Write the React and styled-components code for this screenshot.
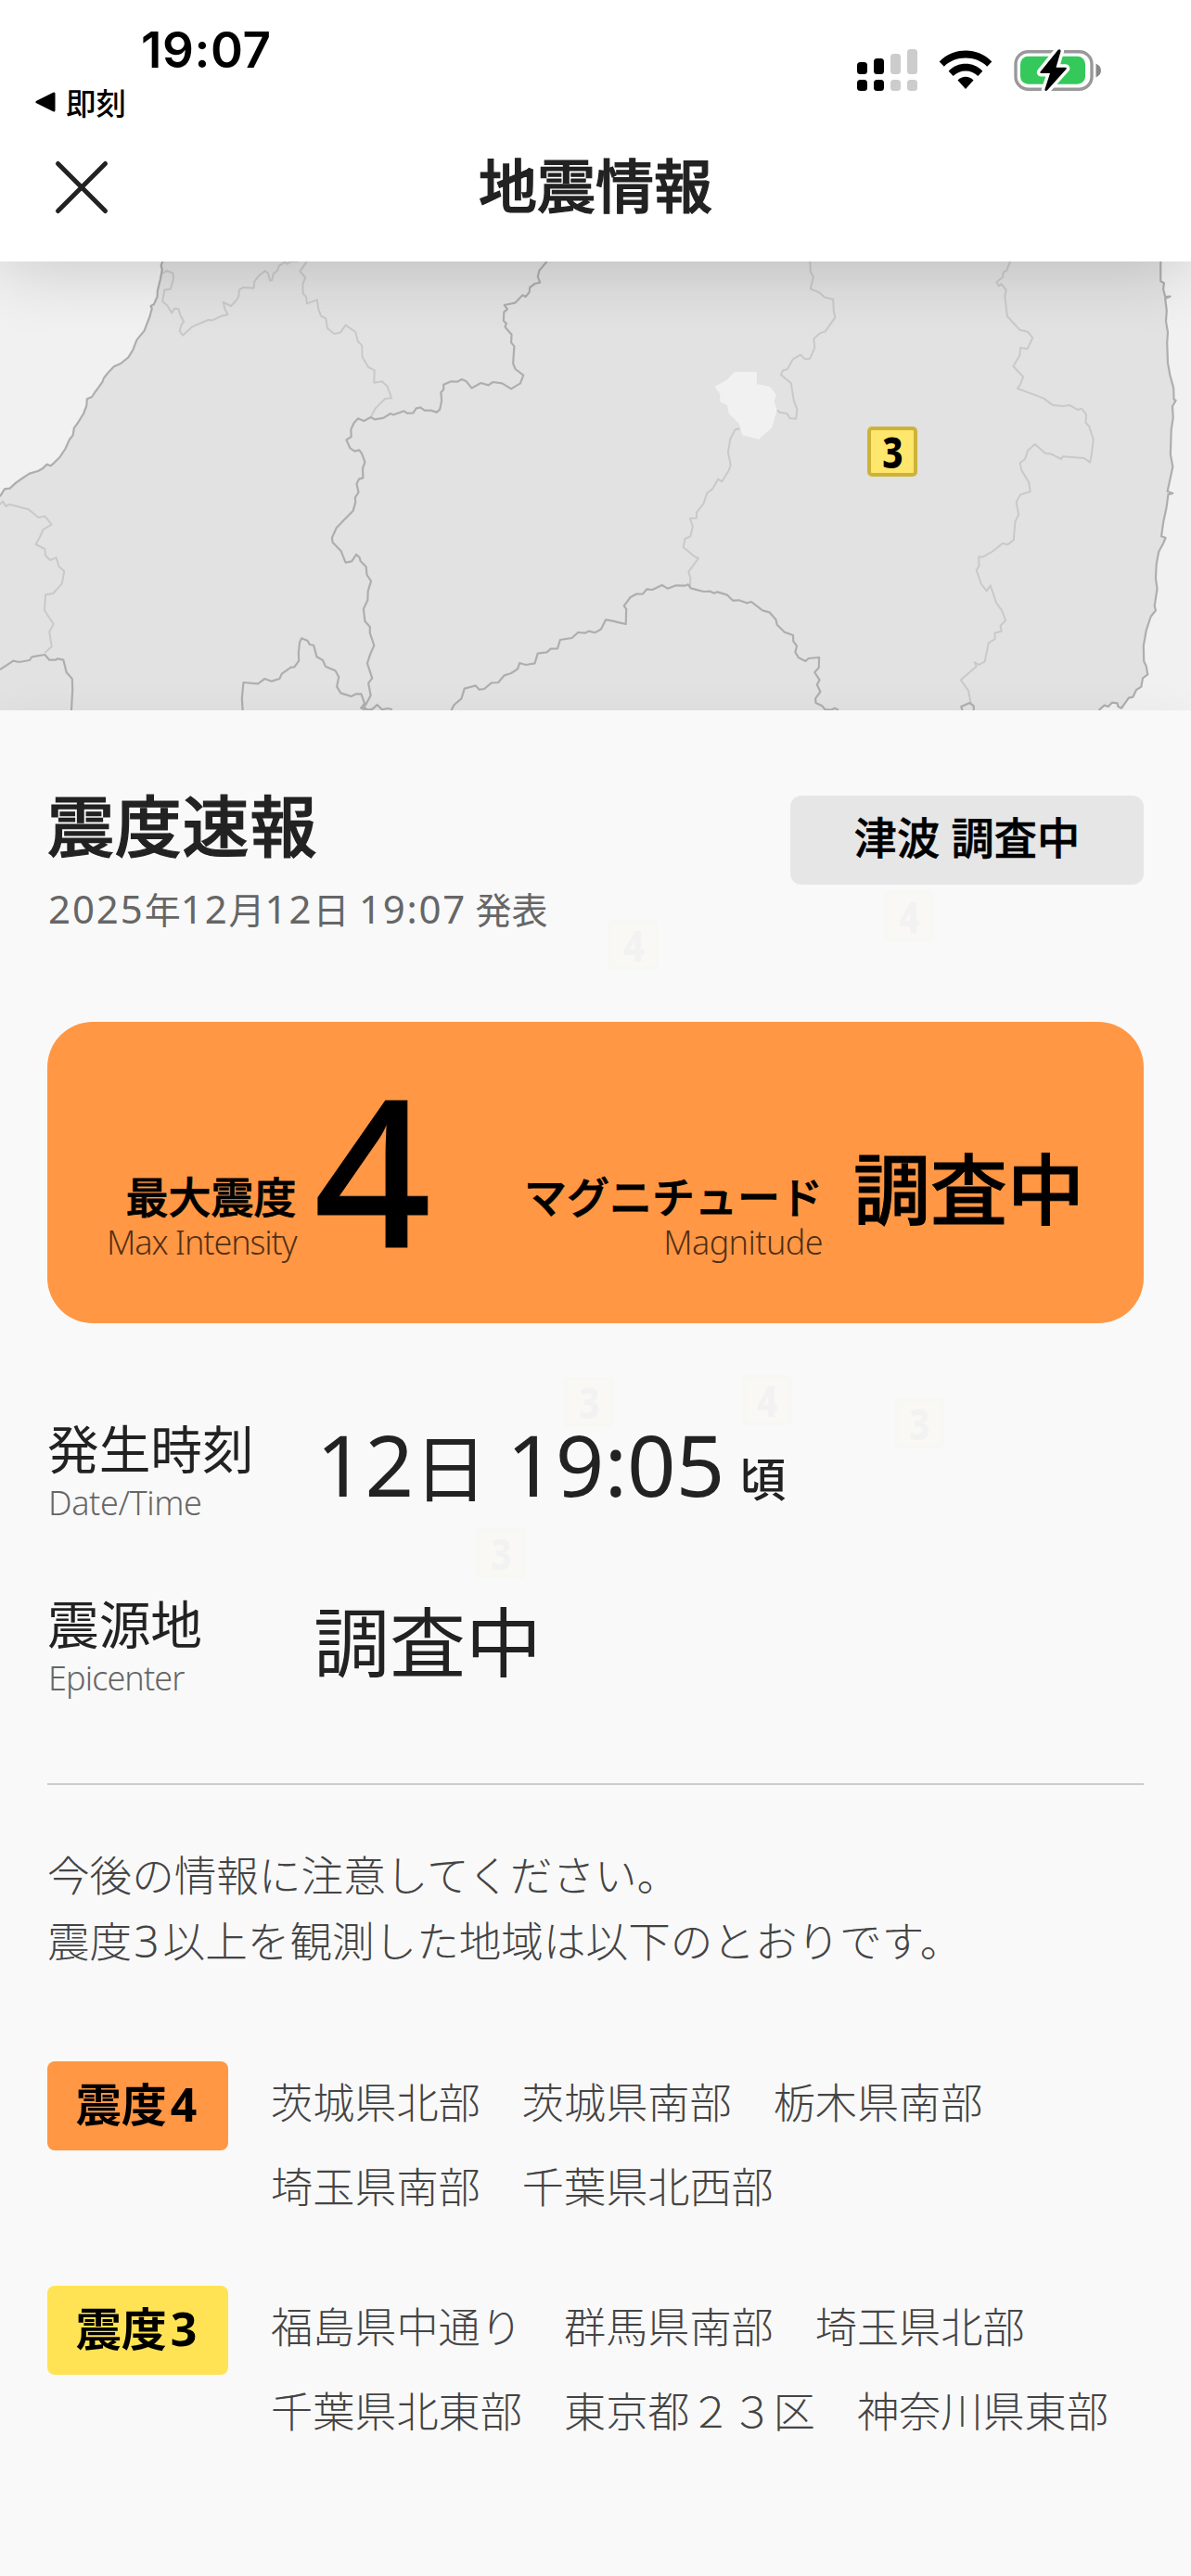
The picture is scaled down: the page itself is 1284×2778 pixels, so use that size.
import React from "react";
import styled, { createGlobalStyle } from "styled-components";

const GlobalStyle = createGlobalStyle`
  * { box-sizing: border-box; }
  html, body { margin: 0; padding: 0; background: #f9f9f9; }
  body { font-family: "Noto Sans CJK JP", "Noto Sans", sans-serif; color: #222; }
`;

const Screen = styled.div`
  width: 1284px;
  height: 2778px;
  overflow: hidden;
  display: flex;
  flex-direction: column;
  background: #f9f9f9;
`;

/* ---------- header ---------- */

const Header = styled.header`
  position: relative;
  z-index: 2;
  height: 282px;
  flex: none;
  background: #fff;
  box-shadow: 0 0 76px rgba(0, 0, 0, 0.2);
`;

const StatusBar = styled.div`
  display: flex;
  justify-content: space-between;
  height: 140px;
  padding: 26px 95px 0 38px;
  color: #000;
`;

const StatusLeft = styled.div`
  display: flex;
  flex-direction: column;
`;

const Clock = styled.div`
  margin-left: 114px;
  font: 600 53px/56px Inter, sans-serif;
  letter-spacing: 0.6px;
`;

const BackLink = styled.div`
  display: flex;
  align-items: center;
  gap: 11px;
  margin-top: 8px;
  font-size: 32.5px;
  line-height: 40px;
  font-weight: 500;
`;

const StatusIcons = styled.div`
  display: flex;
  align-items: flex-start;
  gap: 23px;
  padding-top: 25px;
`;

const NavBar = styled.div`
  display: grid;
  grid-template-columns: 300px 1fr 300px;
  align-items: center;
  height: 116px;
`;

const CloseButton = styled.button`
  display: flex;
  margin-left: 57px;
  width: 62px;
  height: 62px;
  padding: 0;
  border: 0;
  background: none;
  margin-top: 8px;
`;

const NavTitle = styled.h1`
  margin: 0 0 2px;
  text-align: center;
  font-size: 63px;
  line-height: 72px;
  font-weight: 500;
  -webkit-text-stroke: 1.2px currentColor;
`;

/* ---------- map ---------- */

const MapArea = styled.div`
  position: relative;
  height: 484px;
  flex: none;
  background: #e2e2e2;
`;

const MapSvg = styled.svg`
  display: block;
  width: 1284px;
  height: 484px;
  path { vector-effect: non-scaling-stroke; }
`;

const MarkerBox = styled.div`
  position: absolute;
  left: ${(p) => p.$x}px;
  top: ${(p) => p.$y}px;
  width: 54px;
  height: 54px;
  display: flex;
  align-items: center;
  justify-content: center;
  border: 4px solid #cdb338;
  border-radius: 5px;
  background: #ffe66c;
  color: #000;
  opacity: ${(p) => (p.$ghost ? 0.025 : 1)};
`;

const MarkerDigit = styled.span`
  font: 800 46px/46px "Noto Sans", sans-serif;
  transform: scaleX(0.84);
`;

const Marker = ({ children, ...rest }) => (
  <MarkerBox {...rest}>
    <MarkerDigit>{children}</MarkerDigit>
  </MarkerBox>
);

/* ---------- detail panel ---------- */

const Panel = styled.main`
  position: relative;
  flex: 1;
  display: flex;
  flex-direction: column;
  padding: 80px 51px 0;
  background: #f9f9f9;
  box-shadow: 0 0 40px rgba(0, 0, 0, 0.04);
`;

const Num = styled.span`
  font-family: "Noto Sans", sans-serif;
  font-size: ${(p) => p.$size}px;
  letter-spacing: ${(p) => p.$ls || 0}px;
  margin: 0 ${(p) => p.$mr || 0}px 0 ${(p) => p.$ml || 0}px;
  line-height: 0;
`;

const Heading = styled.section`
  display: flex;
  justify-content: space-between;
  height: 256px;
`;

const Title = styled.h2`
  margin: 0;
  font-size: 72px;
  line-height: 82px;
  font-weight: 500;
  letter-spacing: 0.8px;
  -webkit-text-stroke: 1.2px currentColor;
`;

const Announced = styled.p`
  margin: 26px 0 0 1px;
  font-size: 39px;
  line-height: 50px;
  color: #666;
`;

const Tsunami = styled.div`
  width: 381px;
  height: 96px;
  margin-top: 12px;
  border-radius: 12px;
  background: #e6e6e6;
  color: #000;
  text-align: center;
  font-size: 46.2px;
  line-height: 86px;
  font-weight: 500;
  word-spacing: 2px;
  -webkit-text-stroke: 0.6px currentColor;
`;

const Summary = styled.section`
  display: flex;
  justify-content: space-between;
  align-items: flex-end;
  height: 325px;
  flex: none;
  padding: 0 64px 65px 64px;
  border-radius: 49px;
  background: #ff9745;
  color: #000;
`;

const Metric = styled.div`
  display: flex;
  align-items: flex-end;
`;

const MetricLabel = styled.div`
  display: flex;
  flex-direction: column;
  align-items: flex-end;
  font-size: 46px;
  line-height: 56px;
  font-weight: 500;
`;

const MetricName = styled.span`
  margin-bottom: 2px;
  -webkit-text-stroke: 0.8px currentColor;
`;

const English = styled.div`
  font: 300 36px/44px "Noto Sans", sans-serif;
  color: ${(p) => p.$color || "#666"};
  letter-spacing: ${(p) => p.$ls}px;
`;

const Intensity = styled.div`
  margin: 0 0 22px 19px;
  font: 500 221px/160px "Noto Sans", sans-serif;
  letter-spacing: -6px;
  -webkit-text-stroke: 1px currentColor;
`;

const MagnitudeValue = styled.div`
  margin: 0 0 42px 33px;
  font-size: 83px;
  line-height: 84px;
  font-weight: 500;
  -webkit-text-stroke: 1px currentColor;
`;

const Facts = styled.dl`
  display: flex;
  flex-direction: column;
  gap: 75px;
  margin: 101px 0 0;
`;

const Fact = styled.div`
  display: flex;
  height: 114px;
`;

const FactLabel = styled.dt`
  width: 287px;
  font-size: 55.7px;
  line-height: 64px;
`;

const FactEnglish = styled(English)`
  margin: 7px 0 0 1px;
`;

const FactValue = styled.dd`
  margin: ${(p) => p.$top || 0}px 0 0;
  font-size: ${(p) => p.$size}px;
  line-height: 100px;
  white-space: nowrap;
`;

const Around = styled.span`
  margin-left: 16px;
  font-size: 50px;
  font-weight: 500;
  line-height: 0;
`;

const Divider = styled.hr`
  width: 100%;
  height: 2px;
  margin: 92px 0 60px;
  border: 0;
  background: #ccc;
`;

const Notice = styled.p`
  margin: 0 0 93px;
  font-size: 45.6px;
  line-height: 71px;
  font-weight: 300;
  color: #444;
`;

const RegionRow = styled.section`
  display: flex;
  align-items: flex-start;
  gap: 46px;
  margin-bottom: 60px;
`;

const LevelBadge = styled.div`
  width: 195px;
  height: 96px;
  flex: none;
  margin-top: 3px;
  padding-right: 3px;
  border-radius: 8px;
  background: ${(p) => p.$bg};
  color: #000;
  text-align: center;
  font-size: 49px;
  line-height: 88px;
  font-weight: 700;
`;

const Regions = styled.div`
  font-size: 45.15px;
  line-height: 91px;
  font-weight: 300;
  color: #444;
  white-space: pre;
`;

const SignalIcon = () => (
  <svg width="65" height="48" viewBox="0 0 65 48">
    {[[0, 16], [18, 12], [36, 7], [54, 2]].map(([x, y], i) => (
      <g key={x} fill={i < 2 ? "#000" : "#ccc"}>
        <rect x={x} y={y} width="11" height={29 - y} rx="3.5" />
        <rect x={x} y="35" width="11" height="12" rx="3.5" />
      </g>
    ))}
  </svg>
);

const WifiIcon = () => (
  <svg width="58" height="46" viewBox="0 0 58 46">
    <path d="M.7 15.6C15.5-.6 42.5-.6 57.3 15.6L52.2 20.8C40.5 8.4 17.5 8.4 5.8 20.8Z" />
    <path d="M10.7 25.8C20.5 15.2 37.5 15.2 47.3 25.8L42.3 31C35.5 23.5 22.5 23.5 15.7 31Z" />
    <path d="M20.5 35.5C25.5 30.5 32.5 30.5 37.5 35.5L29 45Z" />
  </svg>
);

const BatteryIcon = () => (
  <svg width="96" height="48" viewBox="0 0 96 48">
    <rect x="2" y="4.7" width="82" height="40.5" rx="13.5" fill="none" stroke="#999" strokeWidth="3.4" />
    <rect x="7" y="9.8" width="70" height="30" rx="8.5" fill="#35c95b" />
    <path d="M88.5 17.5c3.500 1.600 5.500 4.200 5.500 7.500s-2 5.900-5.500 7.500z" fill="#888" />
    <path
      d="M47.5 3L28.5 26.5c-.5.8 0 1.500.8 1.500H39l-5.500 17c-.7 2 1.500 2.700 2.600 1.200L56.500 23.500c.7-.9.2-1.700-.8-1.700H45.500L50.500 4.500C51 2.300 48.900 1.300 47.500 3z"
      stroke="#fff"
      strokeWidth="7"
      paintOrder="stroke"
      strokeLinejoin="round"
    />
  </svg>
);

/* Prefecture boundaries are dark, sub-region boundaries are light. */
const WEST_COAST =
  "M428 36L424 50L427 62L422 95L415 130L414 150L405 175L397 180L400 188L394 215L380 260L360 290L350 322L338 346L318 366L300 376L285 395L273 414L270 425L258 446L250 459L242 474L229 481L228 502L220 528L205 558L195 575L192 598L183 612L172 642L158 668L142 688L133 697L124 692L112 706L100 714L78 722L58 738L42 752L26 770L12 772L0 796";
const EAST_COAST =
  "M1488 36L1488 100L1497 106L1495 125L1500 150L1513 149L1500 156L1504 195L1502 230L1507 265L1505 300L1507 365L1513 405L1522 445L1523 482L1528 485L1519 505L1521 540L1516 580L1514 660L1520 700L1513 740L1506 780L1520 786L1508 790L1503 835L1495 880L1490 925L1501 930L1495 948L1483 975L1477 1015L1475 1060L1479 1095L1472 1150L1475 1165L1462 1185L1450 1230L1443 1280L1444 1330L1450 1345L1454 1372L1441 1384L1437 1412L1424 1422L1415 1445L1404 1448L1385 1481L1376 1476L1374 1465L1360 1463L1350 1476L1340 1472L1325 1488";

const WEST_DARK = [
  WEST_COAST,
  "M1440 36L1420 65L1416 85L1422 104L1408 108L1395 120L1394 135L1384 150L1376 145L1356 170L1328 177L1336 190L1327 200L1326 228L1333 236L1330 248L1347 272L1346 298L1354 310L1351 366L1357 384L1378 404L1370 430L1346 448L1322 430L1298 426L1286 436L1266 429L1242 446L1228 424L1216 417L1204 425L1188 424L1168 434L1168 450L1161 460L1163 486L1158 515L1150 524L1135 518L1118 518L1107 508L1096 511L1088 526L1072 527L1064 520L1036 532L1028 528L1010 542L987 547L976 540L958 552L943 544L932 558L924 580L925 603L912 613L922 640L934 650L946 646L953 658L961 685L955 705L956 736L945 740L939 755L944 783L935 800L936 815L930 842L905 873L886 898L874 930L876 945L898 973L910 1010L926 1006L938 984L947 994L949 1005L964 1024L966 1050L977 1070L969 1102L968 1132L957 1160L961 1200L974 1218L974 1238L985 1278L975 1306L967 1336L980 1384L970 1400L976 1440L963 1470L950 1480L962 1488",
  "M0 1356L35 1328L50 1332L78 1326L84 1315L118 1308L130 1325L146 1325L152 1321L167 1325L175 1365L190 1386L191 1420L188 1488",
  "M639 1488L637 1450L641 1398L679 1402L697 1386L715 1394L736 1386L742 1370L766 1349L775 1348L787 1328L786 1303L789 1268L794 1255L810 1263L815 1275L826 1278L834 1315L850 1326L857 1346L883 1360L892 1380L887 1411L897 1432L925 1443L938 1435L951 1435L960 1465L955 1474L968 1487L981 1484L993 1470L1006 1486L1020 1482L1033 1485",
  "M1188 1488L1196 1470L1215 1450L1223 1418L1252 1408L1262 1421L1275 1419L1294 1399L1312 1398L1328 1375L1346 1368L1363 1354L1368 1335L1385 1341L1408 1336L1416 1304L1440 1300L1450 1289L1468 1288L1475 1260L1506 1254L1522 1236L1540 1238L1550 1232L1568 1237",
];

const WEST_LIGHT = [
  "M428 74L440 66L455 74L457 90L449 125L433 128L428 165L440 178L452 202L460 188L470 190L475 210L484 230L478 240L473 260L481 275L505 248L548 225L560 226L583 212L600 208L592 190L588 168L608 180L620 165L628 150L630 128L640 120L668 122L670 100L682 82L698 66L706 74L711 98L716 97L720 75L730 66L735 50L750 38L757 44L765 36L785 36",
  "M808 36L790 68L804 88L797 110L798 140L806 150L808 172L835 160L838 188L845 212L858 220L862 252L880 270L896 266L910 242L936 264L942 294L953 308L954 345L970 378L986 388L985 428L1006 424L1020 440L1031 478L1014 480L988 512L976 540",
  "M0 822L8 812L15 828L25 822L75 838L101 864L118 860L136 887L114 903L104 930L94 951L118 966L120 988L132 1002L148 994L155 1022L169 1038L163 1078L140 1110L120 1114L117 1164L128 1185L141 1209L130 1234L136 1282L118 1302",
];

const EAST_DARK = [
  EAST_COAST,
  "M0 1236L15 1225L27 1195L45 1199L62 1204L80 1209L81 1160L75 1150L92 1122L107 1112L125 1111L135 1096L150 1098L175 1083L190 1094L212 1084L235 1085L244 1081L251 1093L285 1104L302 1103L312 1109L321 1105L347 1115L362 1133L378 1132L398 1141L410 1137L440 1165L458 1171L475 1195L478 1211L498 1235L520 1245L521 1265L530 1280L526 1300L535 1318L553 1329L561 1320L589 1317L588 1350L577 1365L590 1390L583 1405L592 1428L579 1450L580 1464L597 1474L604 1485L620 1487L630 1481L640 1487",
  "M966 1488L963 1476L985 1464L996 1474L996 1488",
];

const EAST_LIGHT = [
  "M565 36L566 70L574 85L566 124L590 137L604 152L626 158L627 195L631 217L605 262L590 269L575 286L577 315L565 350L552 352L540 338L520 352L505 385L494 388L488 402L515 430L522 485L531 515L528 545L512 543L503 527L485 524L478 516",
  "M380 577L368 580L355 610L349 652L356 695L351 712L333 748L323 740L308 772L294 785L284 820L266 848L266 866L249 867L256 893L250 925L236 933L231 960L260 990L271 996L245 1040L250 1060L249 1088",
  "M1092 36L1082 66L1074 70L1072 87L1056 103L1062 115L1069 109L1081 128L1078 150L1084 213L1117 257L1138 263L1151 283L1137 319L1119 315L1117 340L1100 375L1126 409L1118 435L1111 447L1155 467L1180 479L1203 500L1230 504L1248 501L1270 516L1280 512L1292 530L1291 558L1300 570L1311 612L1307 655L1302 686L1286 672L1230 667L1226 675L1200 659L1184 656L1157 627L1138 648L1131 675L1118 688L1122 712L1141 750L1145 780L1118 791L1108 815L1114 855L1105 878L1101 937L1085 952L1072 948L1044 975L1020 992L1009 991L1010 1020L1003 1035L1016 1080L1030 1102L1040 1084L1055 1140L1070 1165L1080 1197L1066 1215L1069 1232L1051 1238L1052 1257L1035 1270L1025 1330L1010 1341L998 1333L1003 1346L980 1370L962 1390L982 1425L988 1465",
];

const Lines = ({ paths, dark }) => (
  <g fill="none" stroke={dark ? "#aeaeae" : "#c9c9c9"} strokeWidth={dark ? 2.2 : 2} strokeLinejoin="round">
    {paths.map((d) => (
      <path key={d} d={d} />
    ))}
  </g>
);

const MapView = () => (
  <MapSvg viewBox="0 0 1284 484">
    <g transform="scale(.40944 .33333) translate(0 -36)">
      <path d={WEST_COAST + "L0 36Z"} fill="#f1f1f1" />
      <Lines paths={WEST_LIGHT} />
      <Lines paths={WEST_DARK} dark />
    </g>
    <g transform="translate(642 0) scale(.40944 .33333) translate(0 -36)">
      <path d={EAST_COAST + "L1568 1488L1568 36Z"} fill="#f1f1f1" />
      <Lines paths={EAST_LIGHT} />
      <Lines paths={EAST_DARK} dark />
      <path
        d="M366 393H425V433L442 436L460 442L476 467L470 490L478 516L465 573L430 611L386 597L378 560L351 528L347 501L328 490L328 465L314 441L345 420Z"
        fill="#f1f1f1"
      />
    </g>
  </MapSvg>
);

const GHOSTS = [
  [4, 656, 226],
  [4, 953, 195],
  [3, 608, 719],
  [4, 800, 717],
  [3, 964, 742],
  [3, 513, 882],
];

const LEVELS = [
  { level: "4", color: "#ff9745", text: "茨城県北部　茨城県南部　栃木県南部\n埼玉県南部　千葉県北西部" },
  { level: "3", color: "#ffe354", text: "福島県中通り　群馬県南部　埼玉県北部\n千葉県北東部　東京都２３区　神奈川県東部" },
];

export default function App() {
  return (
    <Screen lang="ja">
      <GlobalStyle />
      <Header>
        <StatusBar>
          <StatusLeft>
            <Clock>19:07</Clock>
            <BackLink>
              <svg width="22" height="22" viewBox="0 0 22 22">
                <path d="M20 2V20L2 11Z" stroke="#000" strokeWidth="3" strokeLinejoin="round" />
              </svg>
              即刻
            </BackLink>
          </StatusLeft>
          <StatusIcons>
            <SignalIcon />
            <WifiIcon />
            <BatteryIcon />
          </StatusIcons>
        </StatusBar>
        <NavBar>
          <CloseButton aria-label="close">
            <svg width="62" height="62" viewBox="0 0 62 62">
              <path d="M5.5 5.5L56.5 56.5M56.5 5.5L5.5 56.5" stroke="#222" strokeWidth="5" strokeLinecap="round" />
            </svg>
          </CloseButton>
          <NavTitle>地震情報</NavTitle>
        </NavBar>
      </Header>

      <MapArea>
        <MapView />
        <Marker $x={935} $y={178}>3</Marker>
      </MapArea>

      <Panel>
        {GHOSTS.map(([n, x, y]) => (
          <Marker key={x} $x={x} $y={y} $ghost>{n}</Marker>
        ))}
        <Heading>
          <div>
            <Title>震度速報</Title>
            <Announced>
              <Num $size={42} $ls={1.9}>2025</Num>年
              <Num $size={42} $ls={1.9}>12</Num>月
              <Num $size={42} $ls={1.9}>12</Num>日
              <Num $size={42} $ls={1.7} $ml={-2} $mr={-3}> 19:07 </Num>発表
            </Announced>
          </div>
          <Tsunami>津波 調査中</Tsunami>
        </Heading>

        <Summary>
          <Metric>
            <MetricLabel>
              <MetricName>最大震度</MetricName>
              <English $ls={-1.1} $color="rgba(0,0,0,.7)">Max Intensity</English>
            </MetricLabel>
            <Intensity>4</Intensity>
          </Metric>
          <Metric>
            <MetricLabel>
              <MetricName>マグニチュード</MetricName>
              <English $ls={-0.6} $color="rgba(0,0,0,.7)">Magnitude</English>
            </MetricLabel>
            <MagnitudeValue>調査中</MagnitudeValue>
          </Metric>
        </Summary>

        <Facts>
          <Fact>
            <FactLabel>
              発生時刻
              <FactEnglish $ls={-0.4}>Date/Time</FactEnglish>
            </FactLabel>
            <FactValue $top={2} $size={79}>
              <Num $size={92} $ml={3}>12</Num>日<Num $size={92} $ml={-3}> 19:05</Num>
              <Around>頃</Around>
            </FactValue>
          </Fact>
          <Fact>
            <FactLabel>
              震源地
              <FactEnglish $ls={-0.9}>Epicenter</FactEnglish>
            </FactLabel>
            <FactValue $size={82}>調査中</FactValue>
          </Fact>
        </Facts>

        <Divider />

        <Notice>
          今後の情報に注意してください。
          <br />
          震度<Num $size={48} $ml={2} $mr={4}>3</Num>以上を観測した地域は以下のとおりです。
        </Notice>

        {LEVELS.map(({ level, color, text }) => (
          <RegionRow key={level}>
            <LevelBadge $bg={color}>
              震度<Num $size={50} $ml={4}>{level}</Num>
            </LevelBadge>
            <Regions>{text}</Regions>
          </RegionRow>
        ))}
      </Panel>
    </Screen>
  );
}
